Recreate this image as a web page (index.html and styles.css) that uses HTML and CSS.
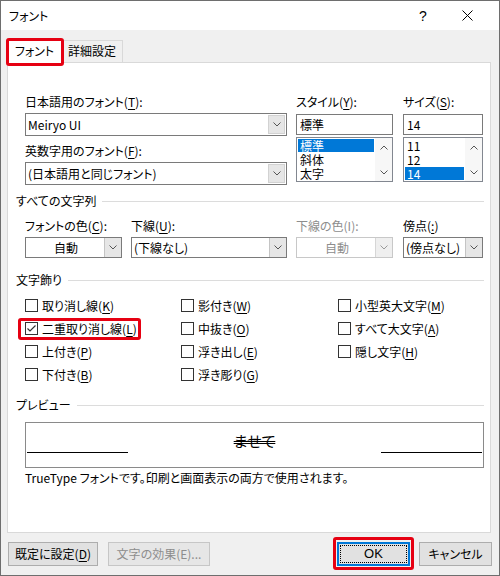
FILE: index.html
```html
<!DOCTYPE html>
<html lang="ja">
<head>
  <meta charset="UTF-8">
  <title>フォント</title>
  <link rel="stylesheet" href="styles.css">
</head>
<body>

<div class="dialog">
  <div class="titlebar">
    <span class="title">フォント</span>
    <span class="help">?</span>
    <span class="close">
      <svg width="11" height="11" viewBox="0 0 11 11"><path d="M0.5 0.5 L10.5 10.5 M10.5 0.5 L0.5 10.5" stroke="#000" stroke-width="1"/></svg>
    </span>
  </div>

  <div class="tabs">
    <div class="tab active">フォント</div>
    <div class="tab">詳細設定</div>
  </div>

  <div class="panel">
    <!-- font names / style / size -->
    <div class="font-row fields">
      <div class="col w-main">
        <label>日本語用のフォント(<u>T</u>):</label>
        <div class="combo edit tall"><span class="value">Meiryo UI</span><span class="drop"><svg width="8" height="5" viewBox="0 0 8 5"><polyline points="0.5,0.5 4,4 7.5,0.5" fill="none" stroke="#555"/></svg></span></div>
        <label class="next">英数字用のフォント(<u>F</u>):</label>
        <div class="combo edit tall"><span class="value">(日本語用と同じフォント)</span><span class="drop"><svg width="8" height="5" viewBox="0 0 8 5"><polyline points="0.5,0.5 4,4 7.5,0.5" fill="none" stroke="#555"/></svg></span></div>
      </div>
      <div class="col w-style">
        <label>スタイル(<u>Y</u>):</label>
        <div class="textbox">標準</div>
        <div class="listbox">
          <div class="items">
            <div class="item sel">標準</div>
            <div class="item">斜体</div>
            <div class="item">太字</div>
          </div>
          <div class="scroll">
            <svg width="8" height="5" viewBox="0 0 8 5"><polyline points="0.5,4.5 4,1 7.5,4.5" fill="none" stroke="#555"/></svg>
            <svg width="8" height="5" viewBox="0 0 8 5"><polyline points="0.5,0.5 4,4 7.5,0.5" fill="none" stroke="#555"/></svg>
          </div>
        </div>
      </div>
      <div class="col w-size">
        <label>サイズ(<u>S</u>):</label>
        <div class="textbox">14</div>
        <div class="listbox">
          <div class="items">
            <div class="item">11</div>
            <div class="item">12</div>
            <div class="item sel">14</div>
          </div>
          <div class="scroll">
            <svg width="8" height="5" viewBox="0 0 8 5"><polyline points="0.5,4.5 4,1 7.5,4.5" fill="none" stroke="#555"/></svg>
            <svg width="8" height="5" viewBox="0 0 8 5"><polyline points="0.5,0.5 4,4 7.5,0.5" fill="none" stroke="#555"/></svg>
          </div>
        </div>
      </div>
    </div>

    <div class="group g-all"><span>すべての文字列</span><i></i></div>
    <div class="attr-row fields">
      <div class="col w-style">
        <label>フォントの色(<u>C</u>):</label>
        <div class="combo"><span class="value center">自動</span><span class="drop"><svg width="8" height="5" viewBox="0 0 8 5"><polyline points="0.5,0.5 4,4 7.5,0.5" fill="none" stroke="#555"/></svg></span></div>
      </div>
      <div class="col w-under">
        <label>下線(<u>U</u>):</label>
        <div class="combo"><span class="value">(下線なし)</span><span class="drop"><svg width="8" height="5" viewBox="0 0 8 5"><polyline points="0.5,0.5 4,4 7.5,0.5" fill="none" stroke="#555"/></svg></span></div>
      </div>
      <div class="col w-style disabled">
        <label>下線の色(I):</label>
        <div class="combo"><span class="value center">自動</span><span class="drop"><svg width="8" height="5" viewBox="0 0 8 5"><polyline points="0.5,0.5 4,4 7.5,0.5" fill="none" stroke="#999"/></svg></span></div>
      </div>
      <div class="col w-size">
        <label>傍点(<u>:</u>)</label>
        <div class="combo"><span class="value">(傍点なし)</span><span class="drop"><svg width="8" height="5" viewBox="0 0 8 5"><polyline points="0.5,0.5 4,4 7.5,0.5" fill="none" stroke="#555"/></svg></span></div>
      </div>
    </div>

    <div class="group g-deco"><span>文字飾り</span><i></i></div>
    <div class="checks fields">
      <div class="check"><span class="box"></span>取り消し線(<u>K</u>)</div>
      <div class="check"><span class="box"></span>影付き(<u>W</u>)</div>
      <div class="check"><span class="box"></span>小型英大文字(<u>M</u>)</div>

      <div class="check marked"><span class="box"><svg width="11" height="11" viewBox="0 0 11 11"><polyline points="1.5,5.5 4,8 9.5,2.5" fill="none" stroke="#333" stroke-width="1.2"/></svg></span>二重取り消し線(<u>L</u>)</div>
      <div class="check"><span class="box"></span>中抜き(<u>O</u>)</div>
      <div class="check"><span class="box"></span>すべて大文字(<u>A</u>)</div>

      <div class="check"><span class="box"></span>上付き(<u>P</u>)</div>
      <div class="check"><span class="box"></span>浮き出し(<u>E</u>)</div>
      <div class="check"><span class="box"></span>隠し文字(<u>H</u>)</div>

      <div class="check"><span class="box"></span>下付き(<u>B</u>)</div>
      <div class="check"><span class="box"></span>浮き彫り(<u>G</u>)</div>
    </div>

    <div class="group g-preview"><span>プレビュー</span><i></i></div>
    <div class="fields">
      <div class="preview">
        <span class="base"></span>
        <span class="sample">ませて</span>
        <span class="base"></span>
      </div>
      <p class="note">TrueType フォントです。印刷と画面表示の両方で使用されます。</p>
    </div>
  </div>

  <div class="buttons">
    <button class="btn w-default">既定に設定(<u>D</u>)</button>
    <button class="btn w-effect" disabled>文字の効果(E)...</button>
    <span class="spacer"></span>
    <button class="btn ok">OK</button>
    <button class="btn cancel">キャンセル</button>
  </div>
</div>

</body>
</html>
```

FILE: styles.css
```css
*,
*::before,
*::after {
  margin: 0;
  padding: 0;
  box-sizing: border-box;
}

body {
  width: 500px;
  height: 576px;
  font-family: "Noto Sans CJK JP", sans-serif;
  font-size: 12px;
  font-feature-settings: "palt";
  color: #000;
  background: #fff;
}

u {
  text-decoration-thickness: 1px;
  text-underline-offset: 2px;
}

.dialog {
  width: 500px;
  height: 576px;
  border: 1px solid #6e6e6e;
  background: #f0f0f0;
  display: flex;
  flex-direction: column;
}

/* title bar */
.titlebar {
  height: 29px;
  flex: none;
  background: #fff;
  display: flex;
  align-items: center;
  padding-left: 8px;
}

.title {
  flex: 1;
  line-height: 16px;
}

.help {
  width: 44px;
  text-align: center;
  font-family: "Liberation Sans", sans-serif;
  font-size: 14px;
}

.close {
  width: 44px;
  display: flex;
  justify-content: center;
  margin-right: 10px;
}

/* tabs */
.tabs {
  height: 32px;
  flex: none;
  display: flex;
  align-items: flex-end;
  padding-left: 6px;
}

.tab {
  height: 22px;
  width: 61px;
  line-height: 20px;
  text-align: center;
  background: #f0f0f0;
  border: 1px solid #d9d9d9;
  border-left: none;
  border-bottom: none;
}

.tab.active {
  position: relative;
  z-index: 1;
  width: 55px;
  height: 25px;
  line-height: 24px;
  margin-bottom: -1px;
  background: #fff;
  border-left: 1px solid #d9d9d9;
}

.tab.active::after {
  content: "";
  position: absolute;
  left: -2px;
  top: -1px;
  width: 58px;
  height: 28px;
  border: 3px solid #e60012;
  border-radius: 3px;
}

.panel {
  width: 484px;
  height: 471px;
  flex: none;
  margin-left: 6px;
  background: #fff;
  border: 1px solid #d9d9d9;
  padding: 31px 6px 0 8px;
}

.fields {
  margin-left: 9px;
}

label {
  display: block;
  height: 16px;
  line-height: 16px;
  white-space: nowrap;
}

.disabled label,
.disabled .value {
  color: #8d8d8d;
}

/* columns */
.font-row,
.attr-row {
  display: flex;
}

.w-main { width: 262px; margin-right: 9px; }
.w-style { width: 97px; margin-right: 9px; }
.w-under { width: 156px; margin-right: 9px; }
.w-size { width: 80px; margin-left: 1px; }

.font-row .w-style { margin-right: 10px; }
.font-row .w-size { margin-left: 0; }

/* combo boxes */
.combo {
  display: flex;
  height: 21px;
  margin-top: 3px;
  border: 1px solid #7a7a7a;
  background: #fff;
}

.combo.tall {
  height: 23px;
}

.combo .value {
  flex: 1;
  padding-left: 2px;
  line-height: 19px;
  white-space: nowrap;
  overflow: hidden;
}

.combo.tall .value {
  line-height: 21px;
}

.combo .value.center {
  text-align: center;
}

.combo .drop {
  width: 17px;
  display: flex;
  align-items: center;
  justify-content: center;
  background: #e6e6e6;
  border-left: 1px solid #c4c4c4;
}

.combo.edit .drop {
  margin: 1px;
  border: 1px solid #d2d2d2;
}

.disabled .combo {
  border-color: #c8c8c8;
}

.disabled .combo .drop {
  background: #efefef;
  border-left-color: #d6d6d6;
}

label.next {
  margin-top: 7px;
}

.textbox {
  height: 21px;
  margin-top: 4px;
  border: 1px solid #7a7a7a;
  padding-left: 3px;
  line-height: 19px;
}

.listbox {
  display: flex;
  height: 45px;
  margin-top: 2px;
  border: 1px solid #828790;
}

.listbox .items {
  flex: 1;
  padding: 1px 1px 0;
  overflow: hidden;
}

.listbox .item {
  height: 13px;
  line-height: 13px;
  padding-left: 2px;
  margin-bottom: 1px;
}

.listbox .item.sel {
  background: #0078d7;
  color: #fff;
}

.listbox .scroll {
  width: 17px;
  display: flex;
  flex-direction: column;
  justify-content: space-between;
  align-items: center;
  padding: 7px 0 6px;
  background: #f7f7f7;
}

/* group headings with a rule */
.group {
  display: flex;
  align-items: center;
  height: 16px;
  line-height: 16px;
}

.group span {
  white-space: nowrap;
  margin-right: 6px;
}

.group i {
  flex: 1;
  height: 1px;
  background: #dcdcdc;
}

.g-all { margin-top: 8px; }
.attr-row label { margin-top: 9px; }
.g-deco { margin-top: 14px; }
.g-preview { margin-top: 11px; }

/* check boxes */
.checks {
  display: grid;
  grid-template-columns: 156px 157px auto;
  grid-auto-rows: 23px;
  margin-top: 6px;
}

.check {
  position: relative;
  justify-self: start;
  display: flex;
  align-items: center;
  white-space: nowrap;
}

.check .box {
  width: 13px;
  height: 13px;
  margin-right: 4px;
  border: 1px solid #333;
  background: #fff;
  display: flex;
  align-items: center;
  justify-content: center;
}

.check.marked::after {
  content: "";
  position: absolute;
  left: -7px;
  right: -4px;
  top: 1px;
  height: 22px;
  border: 3px solid #e60012;
  border-radius: 3px;
}

/* preview */
.preview {
  display: flex;
  width: 459px;
  height: 46px;
  margin-top: 9px;
  border: 1px solid #8a8a8a;
  padding: 0 1px;
}

.preview .base {
  width: 101px;
  height: 1px;
  margin-top: 29px;
  background: #000;
}

.preview .sample {
  flex: 1;
  text-align: center;
  margin-top: 8px;
  font-size: 15px;
  line-height: 20px;
  text-decoration: line-through double;
  text-decoration-thickness: 1px;
}

.note {
  margin-top: 2px;
  line-height: 16px;
}

/* bottom buttons */
.buttons {
  display: flex;
  margin-top: 9px;
  padding: 0 7px 0 7px;
}

.spacer {
  flex: 1;
}

.btn {
  height: 24px;
  font: inherit;
  color: #000;
  background: #e1e1e1;
  border: 1px solid #adadad;
  line-height: 20px;
  text-align: center;
  white-space: nowrap;
}

.btn:disabled {
  color: #8d8d8d;
  background: #e6e6e6;
  border-color: #c6c6c6;
}

.w-default { width: 90px; }
.w-effect { width: 102px; margin-left: 10px; }

.ok {
  position: relative;
  width: 73px;
  border: 2px solid #0078d7;
  font-family: "Liberation Sans", sans-serif;
  font-size: 13px;
}

.ok::before {
  content: "";
  position: absolute;
  left: 1px;
  top: 1px;
  right: 1px;
  bottom: 1px;
  border: 1px dotted #000;
}

.ok::after {
  content: "";
  position: absolute;
  left: -6px;
  top: -7px;
  width: 81px;
  height: 33px;
  border: 3px solid #e60012;
  border-radius: 3px;
}

.cancel {
  width: 73px;
  margin-left: 9px;
}
```
